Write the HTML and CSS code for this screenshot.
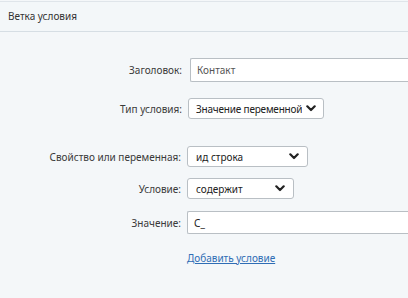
FILE: index.html
```html
<!DOCTYPE html>
<html lang="ru">
<head>
<meta charset="utf-8">
<link rel="stylesheet" href="styles.css">
</head>
<body>
<div class="panel">
  <div class="header">Ветка условия</div>
  <div class="form">
    <div class="row row-title">
      <label class="lbl lbl-a">Заголовок:</label>
      <div class="input input-title">Контакт</div>
    </div>
    <div class="row row-type">
      <label class="lbl lbl-b">Тип условия:</label>
      <div class="select sel-type"><span class="opt opt-tight">Значение переменной</span><svg class="chev" viewBox="0 0 10 7" width="10" height="7"><path d="M1.3 1.3 L5 5 L8.7 1.3" fill="none" stroke="#222" stroke-width="2.2" stroke-linecap="round" stroke-linejoin="round"/></svg></div>
    </div>
    <div class="row row-prop">
      <label class="lbl">Свойство или переменная:</label>
      <div class="select sel-prop"><span class="opt">ид строка</span><svg class="chev" viewBox="0 0 10 7" width="10" height="7"><path d="M1.3 1.3 L5 5 L8.7 1.3" fill="none" stroke="#222" stroke-width="2.2" stroke-linecap="round" stroke-linejoin="round"/></svg></div>
    </div>
    <div class="row row-cond">
      <label class="lbl">Условие:</label>
      <div class="select sel-cond"><span class="opt">содержит</span><svg class="chev" viewBox="0 0 10 7" width="10" height="7"><path d="M1.3 1.3 L5 5 L8.7 1.3" fill="none" stroke="#222" stroke-width="2.2" stroke-linecap="round" stroke-linejoin="round"/></svg></div>
    </div>
    <div class="row row-val">
      <label class="lbl">Значение:</label>
      <div class="input input-val">С_</div>
    </div>
    <div class="row row-link">
      <span class="lbl"></span>
      <a class="add" href="#">Добавить условие</a>
    </div>
  </div>
</div>
</body>
</html>
```
FILE: styles.css
```css
html, body {
  margin: 0;
  padding: 0;
  background: #f4f7f9;
}
body {
  font-family: "Noto Sans", "Open Sans", sans-serif;
  font-size: 10px;
  color: #333;
  width: 408px;
  height: 298px;
  overflow: hidden;
}
.panel {
  padding-top: 1px;
}
.header {
  border-top: 1px solid #dfe5ea;
  border-bottom: 1px solid #d6dee4;
  height: 29px;
  line-height: 29px;
  padding-left: 8px;
  color: #333;
  background: #f3f7f9;
}
.form {
  padding-top: 26px;
  display: flex;
  flex-direction: column;
}
.row {
  display: flex;
  align-items: center;
}
.lbl {
  width: 181px;
  flex: none;
  text-align: right;
  color: #3a3a3a;
}
.lbl-a, .lbl-b { width: 182px; }
.input, .select {
  box-sizing: border-box;
  background: #fff;
  border: 1px solid #b9bfc4;
  border-radius: 3px;
  margin-left: 6px;
  display: flex;
  align-items: center;
  white-space: nowrap;
}
.input {
  padding-left: 6px;
  flex: none;
  border-right: none;
  border-radius: 2px 0 0 2px;
}
.input-title {
  width: 218px;
  height: 24px;
  color: #555;
  margin-left: 8px;
}
.input-val {
  width: 221px;
  height: 23px;
  color: #222;
}
.select {
  height: 21px;
  padding: 0 8px 0 8px;
  justify-content: space-between;
  color: #222;
  flex: none;
}
.opt {
  overflow: hidden;
}
.opt-tight {
  letter-spacing: -0.2px;
}
.chev {
  flex: none;
  margin-left: 3px;
}
.sel-type { width: 136px; margin-left: 6px; padding-left: 7px; padding-right: 7px; }
.sel-prop { width: 121px; }
.sel-cond { width: 107px; }
.row-type { margin-top: 16px; }
.row-prop { margin-top: 27px; }
.row-cond { margin-top: 11px; }
.row-val { margin-top: 12px; }
.row-link { margin-top: 17px; }
.add {
  margin-left: 6px;
  color: #2f6db5;
  text-decoration: underline;
}
```
